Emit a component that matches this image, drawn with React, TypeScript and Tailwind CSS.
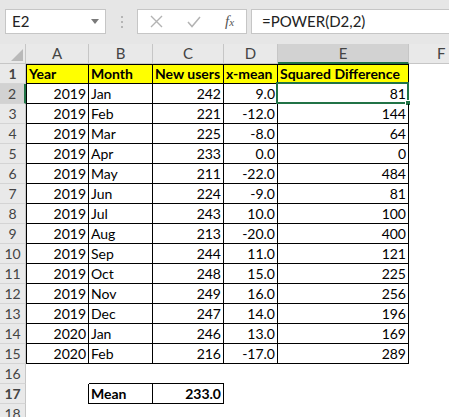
import React from 'react'

type Row = [string, string, string, string, string]

const rows: Row[] = [
  ['2019', 'Jan', '242', '9.0', '81'],
  ['2019', 'Feb', '221', '-12.0', '144'],
  ['2019', 'Mar', '225', '-8.0', '64'],
  ['2019', 'Apr', '233', '0.0', '0'],
  ['2019', 'May', '211', '-22.0', '484'],
  ['2019', 'Jun', '224', '-9.0', '81'],
  ['2019', 'Jul', '243', '10.0', '100'],
  ['2019', 'Aug', '213', '-20.0', '400'],
  ['2019', 'Sep', '244', '11.0', '121'],
  ['2019', 'Oct', '248', '15.0', '225'],
  ['2019', 'Nov', '249', '16.0', '256'],
  ['2019', 'Dec', '247', '14.0', '196'],
  ['2020', 'Jan', '246', '13.0', '169'],
  ['2020', 'Feb', '216', '-17.0', '289'],
]

const gridCols = 'grid grid-cols-[26px_63px_64px_71px_54px_131px_1fr]'

const RowHead = ({ n, selected = false }: { n: number; selected?: boolean }) => (
  <div
    className={
      selected
        ? 'h-5 flex items-center justify-center bg-[#d2d2d2] border-b border-[#d4d4d4] border-r-2 border-r-[#217346] text-[#444]'
        : 'h-5 flex items-center justify-center bg-[#e9e9e9] border-b border-[#d4d4d4] border-r border-r-[#c6c6c6] text-[#444]'
    }
  >
    {n}
  </div>
)

export default function App() {
  return (
    <div className="w-[449px] h-[417px] overflow-hidden bg-white text-[14px] leading-none text-black font-['Lato','Liberation_Sans',sans-serif]">
      {/* formula bar */}
      <div className="h-11 bg-[#e6e6e6] flex items-start pt-[9px] pl-[5px] gap-0">
        <div className="w-[101px] h-[25px] bg-white border border-[#c6c6c6] flex items-center justify-between pl-[6px] pr-[6px] text-[#222] text-[15px]">
          <span>E2</span>
          <svg width="8" height="5" viewBox="0 0 8 5">
            <path d="M0 0 L8 0 L4 5 Z" fill="#7a7a7a" />
          </svg>
        </div>
        <div className="w-[31px] h-[25px] flex flex-col items-center justify-center gap-[3px]">
          <span className="w-[2px] h-[2px] bg-[#b5b5b5]" />
          <span className="w-[2px] h-[2px] bg-[#b5b5b5]" />
          <span className="w-[2px] h-[2px] bg-[#b5b5b5]" />
        </div>
        <div className="w-[110px] h-[25px] bg-white border border-[#c6c6c6] flex items-center pl-[12px] gap-[24px]">
          <svg width="13" height="13" viewBox="0 0 13 13">
            <path d="M1 1 L12 12 M12 1 L1 12" stroke="#b3b3b3" strokeWidth="1.4" />
          </svg>
          <svg width="14" height="12" viewBox="0 0 14 12">
            <path d="M1 6 L5 10.5 L13 1" stroke="#b3b3b3" strokeWidth="1.5" fill="none" />
          </svg>
          <span className="italic text-[#555] font-['Liberation_Serif',serif] text-[15px]">
            f<span className="text-[11px]">x</span>
          </span>
        </div>
        <div className="ml-[4px] flex-1 h-[25px] bg-white border-y border-l border-[#c6c6c6] flex items-center pl-[10px] text-[#222] text-[15px]">
          =POWER(D2,2)
        </div>
      </div>

      {/* column headers */}
      <div className={`${gridCols} h-5 text-[#444] text-[15px]`}>
        <div className="bg-[#e9e9e9] border-r border-b border-[#c6c6c6] flex items-end justify-end p-[2px]">
          <svg width="12" height="12" viewBox="0 0 12 12">
            <path d="M12 0 L12 12 L0 12 Z" fill="#b9b9b9" />
          </svg>
        </div>
        <div className="bg-[#e9e9e9] border-r border-b border-[#c6c6c6] flex items-center justify-center">A</div>
        <div className="bg-[#e9e9e9] border-r border-b border-[#c6c6c6] flex items-center justify-center">B</div>
        <div className="bg-[#e9e9e9] border-r border-b border-[#c6c6c6] flex items-center justify-center">C</div>
        <div className="bg-[#e9e9e9] border-r border-b border-[#c6c6c6] flex items-center justify-center">D</div>
        <div className="bg-[#d2d2d2] border-r border-[#c6c6c6] border-b-2 border-b-[#217346] flex items-center justify-center">E</div>
        <div className="bg-[#e9e9e9] border-b border-[#c6c6c6] flex items-center pl-[28px]">F</div>
      </div>

      {/* row 1: headings */}
      <div className={`${gridCols} h-5 font-bold`}>
        <RowHead n={1} />
        <div className="bg-[#ffff00] border-y border-x border-black flex items-center px-[2px]">Year</div>
        <div className="bg-[#ffff00] border-y border-r border-black flex items-center px-[2px]">Month</div>
        <div className="bg-[#ffff00] border-y border-r border-black flex items-center px-[2px] whitespace-nowrap">New users</div>
        <div className="bg-[#ffff00] border-y border-r border-black flex items-center px-[2px] whitespace-nowrap">x-mean</div>
        <div className="bg-[#ffff00] border-y border-r border-black flex items-center px-[2px] whitespace-nowrap">Squared Difference</div>
        <div />
      </div>

      {/* data rows */}
      {rows.map((r, i) => (
        <div key={i} className={`${gridCols} h-5`}>
          <RowHead n={i + 2} selected={i === 0} />
          <div className="border-b border-x border-black flex items-center justify-end px-[2px]">{r[0]}</div>
          <div className="border-b border-r border-black flex items-center px-[2px]">{r[1]}</div>
          <div className="border-b border-r border-black flex items-center justify-end px-[2px]">{r[2]}</div>
          <div className="border-b border-r border-black flex items-center justify-end px-[2px]">{r[3]}</div>
          <div className="relative border-b border-r border-black flex items-center justify-end px-[2px]">
            {r[4]}
            {i === 0 && (
              <div className="absolute -left-[2px] -top-[2px] -right-[1px] -bottom-[1px] border-2 border-[#217346]">
                <div className="absolute -right-[4px] -bottom-[4px] w-[6px] h-[6px] bg-[#217346] border border-white" />
              </div>
            )}
          </div>
          <div />
        </div>
      ))}

      {/* row 16 */}
      <div className={`${gridCols} h-5`}>
        <RowHead n={16} />
        <div />
        <div className="border-b border-black" />
        <div className="border-b border-black" />
        <div />
        <div />
        <div />
      </div>

      {/* row 17: mean */}
      <div className={`${gridCols} h-5 font-bold`}>
        <RowHead n={17} />
        <div className="border-r border-black" />
        <div className="border-b border-r border-black flex items-center px-[2px]">Mean</div>
        <div className="border-b border-r border-black flex items-center justify-end px-[2px]">233.0</div>
        <div />
        <div />
        <div />
      </div>

      {/* row 18 */}
      <div className={`${gridCols} h-5`}>
        <RowHead n={18} />
        <div />
        <div />
        <div />
        <div />
        <div />
        <div />
      </div>
    </div>
  )
}
